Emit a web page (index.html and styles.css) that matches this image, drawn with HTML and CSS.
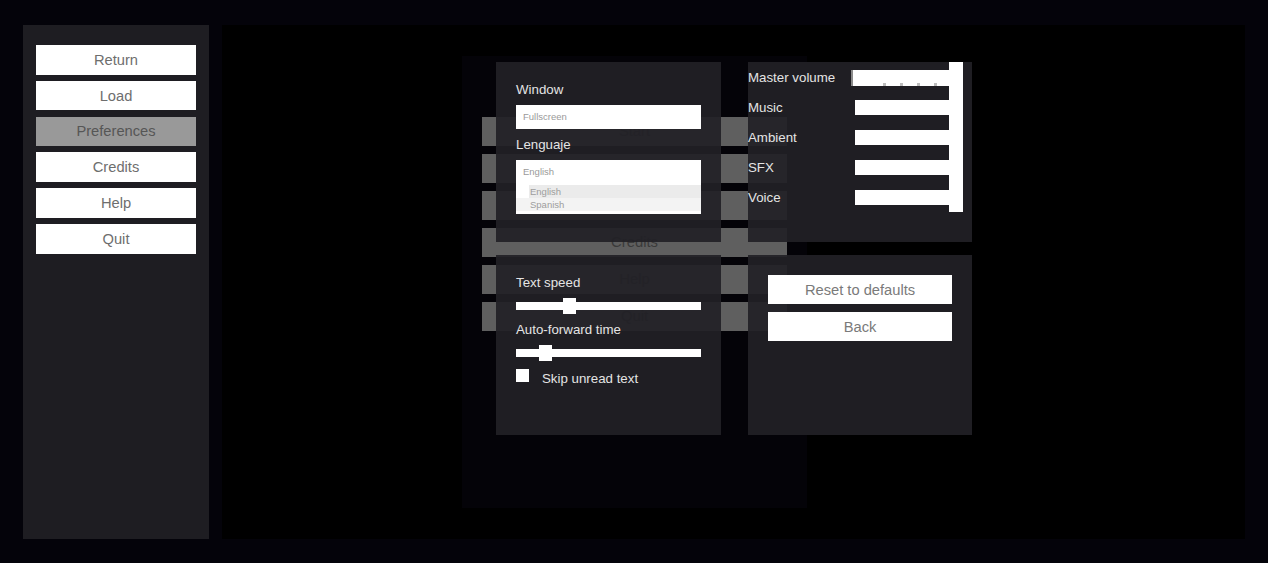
FILE: index.html
```html
<!DOCTYPE html>
<html>
<head>
<meta charset="utf-8">
<title>Preferences</title>
<link rel="stylesheet" href="styles.css">
</head>
<body>
<div class="screen">
  <nav class="sidebar">
    <button class="side-btn">Return</button>
    <button class="side-btn">Load</button>
    <button class="side-btn active">Preferences</button>
    <button class="side-btn">Credits</button>
    <button class="side-btn">Help</button>
    <button class="side-btn">Quit</button>
  </nav>
  <main class="stage">
    <section class="main-menu">
      <h1 class="mm-title">Main Menu</h1>
      <div class="mm-list">
        <div class="mm-btn">Start</div>
        <div class="mm-btn">Load</div>
        <div class="mm-btn">Preferences</div>
        <div class="mm-btn">Credits</div>
        <div class="mm-btn">Help</div>
        <div class="mm-btn">Quit</div>
      </div>
    </section>
    <div class="settings">
      <section class="panel panel-display">
        <div class="label">Window</div>
        <div class="field">Fullscreen</div>
        <div class="label gap-top">Lenguaje</div>
        <div class="dropdown">
          <div class="dd-value">English</div>
          <div class="dd-opt selected">English</div>
          <div class="dd-opt alt">Spanish</div>
        </div>
      </section>
      <section class="panel panel-audio">
        <div class="vol-row">
          <span class="vol-label">Master volume</span>
          <span class="vol-bar master"></span>
        </div>
        <div class="vol-row">
          <span class="vol-label">Music</span>
          <span class="vol-bar"></span>
        </div>
        <div class="vol-row">
          <span class="vol-label">Ambient</span>
          <span class="vol-bar"></span>
        </div>
        <div class="vol-row">
          <span class="vol-label">SFX</span>
          <span class="vol-bar"></span>
        </div>
        <div class="vol-row">
          <span class="vol-label">Voice</span>
          <span class="vol-bar"></span>
        </div>
        <div class="scrollbar"></div>
      </section>
      <section class="panel panel-text">
        <div class="label">Text speed</div>
        <div class="slider"><span class="track"></span><span class="thumb" style="left:47px"></span></div>
        <div class="label gap-top2">Auto-forward time</div>
        <div class="slider"><span class="track"></span><span class="thumb" style="left:23px"></span></div>
        <label class="check-row"><span class="checkbox"></span><span class="check-text">Skip unread text</span></label>
      </section>
      <section class="panel panel-actions">
        <button class="act-btn">Reset to defaults</button>
        <button class="act-btn">Back</button>
      </section>
    </div>
  </main>
</div>
</body>
</html>
```

FILE: styles.css
```css
* { box-sizing: border-box; }
html, body {
  margin: 0;
  padding: 0;
  width: 1268px;
  height: 563px;
  overflow: hidden;
  background: #04030a;
  font-family: "Liberation Sans", Arial, sans-serif;
}
.screen {
  display: flex;
  gap: 13px;
  padding: 25px 0 0 23px;
}
.sidebar {
  width: 186px;
  height: 514px;
  background: #1e1d22;
  padding: 20px 13px;
  display: flex;
  flex-direction: column;
  gap: 6.2px;
}
.side-btn {
  height: 29.6px;
  border: 0;
  margin: 0;
  background: #ffffff;
  color: #6e6e6e;
  font-family: "Liberation Sans", Arial, sans-serif;
  font-size: 14.7px;
  padding: 0;
}
.side-btn.active {
  background: #999999;
  color: #565656;
}
.stage {
  position: relative;
  width: 1023px;
  height: 514px;
  background: #000000;
}
.main-menu {
  margin: 31px 0 0 240px;
  width: 345px;
  height: 452px;
  background: #040308;
  padding: 0 20px;
}
.mm-title {
  margin: 0;
  padding-top: 24px;
  height: 61px;
  text-align: center;
  font-weight: normal;
  font-size: 21.2px;
  line-height: 26px;
  color: #000000;
}
.mm-list {
  display: flex;
  flex-direction: column;
  gap: 8px;
}
.mm-btn {
  height: 29px;
  background: #5f5f5f;
  color: #3a3a3a;
  font-size: 14.8px;
  line-height: 29px;
  text-align: center;
}
.settings {
  position: absolute;
  left: 274px;
  top: 37px;
  display: grid;
  grid-template-columns: 225px 224px;
  grid-template-rows: 180px 180px;
  column-gap: 27px;
  row-gap: 13px;
}
.panel {
  background: rgba(33, 32, 38, 0.93);
  position: relative;
}
.label {
  color: #e4e4e4;
  font-size: 13.3px;
  line-height: 16px;
  height: 16px;
}
.panel-display {
  padding: 20px 20px 0 20px;
}
.panel-display .label { margin-bottom: 7px; }
.panel-display .gap-top { margin-top: 8px; }
.field {
  height: 24px;
  background: #ffffff;
  color: #9a9a9a;
  font-size: 9.5px;
  line-height: 24px;
  padding-left: 7px;
}
.dropdown {
  height: 54px;
  background: #ffffff;
  font-size: 9.5px;
  color: #9a9a9a;
  padding-top: 5px;
}
.dd-value {
  height: 20px;
  line-height: 14px;
  padding-left: 7px;
}
.dd-opt {
  height: 13px;
  line-height: 13px;
  padding-left: 14px;
  color: #9d9d9d;
}
.dd-opt.selected {
  margin-left: 13px;
  padding-left: 1px;
  background: #ebebeb;
}
.dd-opt.alt {
  background: #f3f3f3;
}
.panel-audio {
  padding: 0;
}
.vol-row {
  height: 30px;
  display: flex;
  align-items: center;
}
.vol-label {
  width: 107px;
  flex: none;
  color: #e4e4e4;
  font-size: 13.3px;
  line-height: 16px;
  margin-top: 2px;
}
.vol-bar {
  width: 94px;
  height: 15px;
  background: #ffffff;
  margin-top: 1px;
}
.vol-bar.master {
  margin-left: -4px;
  width: 98px;
  height: 16px;
  margin-top: 2px;
  border-left: 2px solid #8a8a8a;
  background:
    repeating-linear-gradient(90deg, transparent 0 14px, #bdbdbd 14px 17px) left 16px bottom 0 / 100% 3px no-repeat,
    #ffffff;
}
.scrollbar {
  position: absolute;
  left: 201px;
  top: 0;
  width: 14px;
  height: 150px;
  background: #ffffff;
}
.panel-text {
  padding: 20px 20px 0 20px;
}
.panel-text .label { margin-bottom: 7px; }
.panel-text .gap-top2 { margin-top: 8px; }
.slider {
  position: relative;
  height: 16px;
  display: flex;
  align-items: center;
}
.track {
  display: block;
  width: 185px;
  height: 8px;
  background: #ffffff;
}
.thumb {
  position: absolute;
  top: 0;
  width: 13px;
  height: 16px;
  background: #ffffff;
}
.check-row {
  display: flex;
  align-items: flex-start;
  margin-top: 8px;
  gap: 13px;
}
.checkbox {
  width: 13px;
  height: 13px;
  background: #ffffff;
  flex: none;
}
.check-text {
  color: #e4e4e4;
  font-size: 13.3px;
  line-height: 16px;
  margin-top: 2px;
}
.panel-actions {
  padding: 20px 20px 0 20px;
  display: flex;
  flex-direction: column;
  gap: 8px;
}
.act-btn {
  height: 29px;
  border: 0;
  margin: 0;
  padding: 0;
  background: #ffffff;
  color: #7a7a7a;
  font-family: "Liberation Sans", Arial, sans-serif;
  font-size: 14.7px;
}
```
